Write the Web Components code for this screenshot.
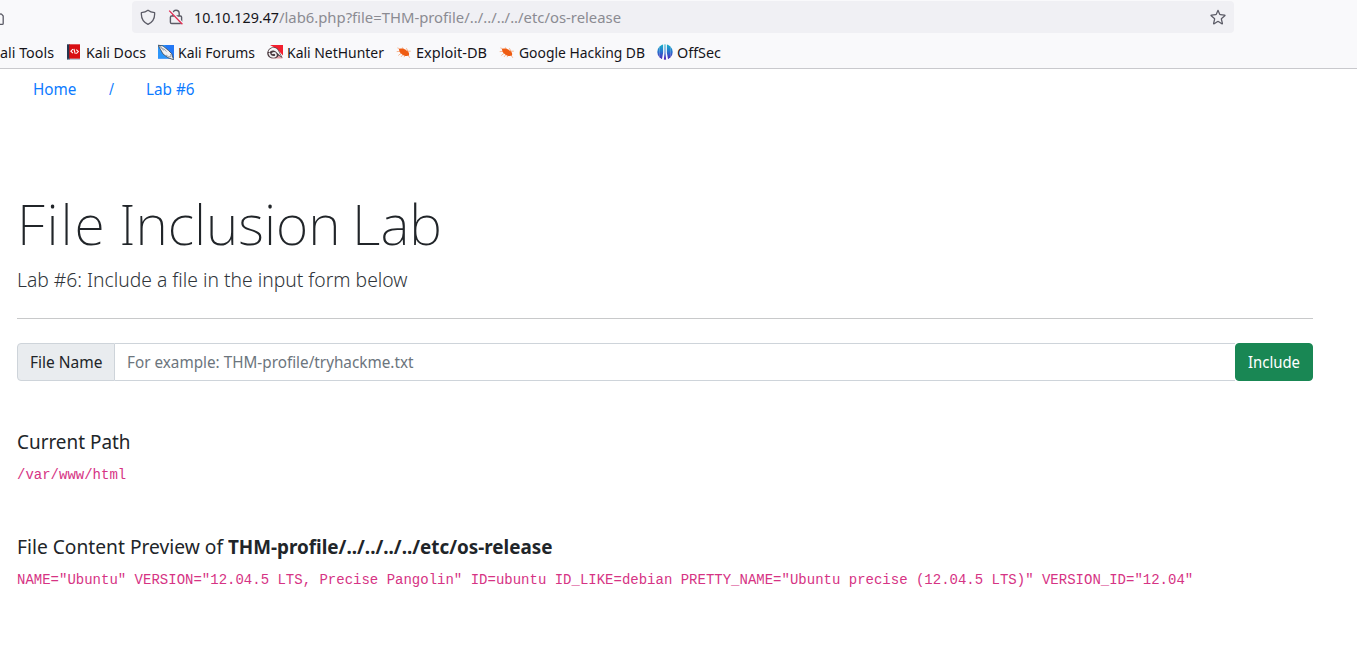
<!DOCTYPE html>
<html lang="en">
<head>
<meta charset="utf-8">
<title>File Inclusion Lab</title>
<style>
body{margin:0;background:#fff;color:#212529;font:400 16px/24px "Noto Sans","Open Sans",sans-serif;overflow:hidden}
</style>
</head>
<body>
<lab-window></lab-window>
<script>
const define=(name,html,ready)=>customElements.define(name,class extends HTMLElement{
  connectedCallback(){
    if(this.shadowRoot)return;
    const t=document.createElement('template');
    t.innerHTML=html;
    this.attachShadow({mode:'open'}).append(t.content.cloneNode(true));
    if(ready)ready.call(this,this.shadowRoot);
  }
});

/* One line of text condensed or widened to a given advance width. */
define('fit-text',`<style>:host{display:inline-block;white-space:pre;flex:none}span{display:inline-block;transform-origin:0 50%}</style><span><slot></slot></span>`,function(root){
  const s=root.querySelector('span'),w=+this.getAttribute('w'),n=s.getBoundingClientRect().width;
  this.style.width=w+'px';
  s.style.transform='scaleX('+w/n+')';
});

const icons={
  home:`<path d="M-4 8 0 4.200Q1 3.400 2 4.600L3.200 6V13.400Q3.200 14.400 2.200 14.400H0" fill="none" stroke="#5b5b66" stroke-width="1.300"/>`,
  shield:`<path d="M8 1.200C6.400 2.400 3.900 3.300 1.400 3.600 1 8.700 3.500 13.200 8 15.300 12.500 13.200 15 8.700 14.600 3.600 12.100 3.300 9.600 2.400 8 1.200Z" fill="none" stroke="#5b5b66" stroke-width="1.300" stroke-linejoin="round"/>`,
  lock:`<path d="M4.800 7V4.500a3.200 3.200 0 0 1 6.400 0V7M3.600 7h8.800q1.200 0 1.200 1.200v5q0 1.300-1.300 1.300H3.700q-1.300 0-1.300-1.300v-5Q2.400 7 3.600 7Z" fill="none" stroke="#5b5b66" stroke-width="1.400"/><path d="M1.600 1 15 14.900" stroke="#f0f0f4" stroke-width="2.400"/><path d="M1.200 1.600 14.400 15.300" stroke="#e22850" stroke-width="1.300"/>`,
  star:`<path d="m8 1.300 1.700 3.900q.15.400.6.450l4.200.4q.9.150.3.800l-3.200 2.700q-.3.300-.2.700l1 4.100q.1.800-.6.450L8.400 12.600q-.4-.2-.8 0L4.200 14.800q-.7.350-.6-.45l1-4.100q.1-.4-.2-.7L1.200 6.850q-.6-.65.3-.8l4.200-.4q.45-.05.6-.45Z" fill="none" stroke="#5b5b66" stroke-width="1.250" stroke-linejoin="round"/>`,
  docs:`<path d="M1 .3H4V15.700H1Z" fill="#253850"/><path d="M3.200.3H14V14.800H3.200Z" fill="#d90f13"/><path d="M1.500 14.800H14v.9H1.500Z" fill="#a4b7c9"/><path d="M6.900 5.200 4.900 7.200 6.900 9.200M10.300 5.600 12.300 7.600 10.300 9.600M7.900 4.900 9.300 9.900" fill="none" stroke="#fff" stroke-width="1.100"/>`,
  forums:`<path d="M0 1H16V14.600H0Z" fill="#2478f5"/><path d="M0 1H7L12 14.600H0Z" fill="#2c96fa"/><path d="M0 1.200 5 1.900 10.500 6.500 13.700 9.700 15.600 15.800 9.800 13.600 5 10 2.500 5.500Z" fill="#f1f1f3" stroke="#3c4552" stroke-width=".8"/><path d="M5.500 4.500 8.500 7.700M8 11 10.500 12.600 13 12.700 12.500 10" fill="none" stroke="#8b929c" stroke-width=".8"/><path d="M1 1.500 5.800 6.200" stroke="#4c5563" stroke-width=".8"/>`,
  nethunter:`<path d="M3 1H16V11.500L10 5Z" fill="#f2202f"/><path d="M8.500 12 12 9.500 15.500 14.500H3.500Z" fill="#e9a2aa"/><path d="M.3 8.300C1.500 2.800 8 1.900 11 5.200L15.800 14.300 11.500 11.500C11 13.500 9 14.500 6.500 14.300 2.500 14.500-.3 11.900.3 8.300Z" fill="#4a3a40"/><path d="M1.300 7.300C3.600 2.800 8.500 2.700 10.800 6.100L14.300 12.700 9.800 8.500C7.200 5.800 3.800 5.900 2.500 8.700Z" fill="#f5f5f7"/><path d="M2.300 9C2.400 11.600 4.400 13 6.900 12.900 8.800 12.700 9.500 11.200 8.700 9.900 7.900 8.500 5.900 8.500 5.200 9.900" fill="none" stroke="#f0eff1" stroke-width="1.700"/>`,
  bug:`<path d="m1.400 3.900 4 1.500M.7 7.600l4.700-.3M2.300 11.500 6 8.500M6.400 3.400 8 6.300M10.400 4.200 12 7.500M14.800 7.200H11M13.800 13.800l-2-3.100M8 13.200 9.500 10.500M5 12.900 7.600 9.800" stroke="#f48a4e" stroke-width=".6" fill="none"/><path d="M2.800 5.200C5 4 8.200 4.600 10.500 6.400 12.800 7.500 13.700 9.400 12.900 11.600 10.300 12.600 7.900 11.800 5.700 9.900 3.700 9 3.400 6.900 2.800 5.200Z" fill="#ef5c12"/>`,
  offsec:`<defs><linearGradient id="g" gradientUnits="userSpaceOnUse" x1="0" y1="0" x2="0" y2="16"><stop stop-color="#15b4c8"/><stop offset=".5" stop-color="#2970ce"/><stop offset="1" stop-color="#5620b8"/></linearGradient><clipPath id="c"><circle cx="8" cy="8" r="7.700"/></clipPath></defs><g clip-path="url(#c)"><path d="M0 0H2.400V16H0ZM2.600 0H6.100V9L4.900 15.500 2.600 14ZM9.900 0H13.400V14L11.100 15.500 9.900 9ZM13.600 0H16V16H13.600ZM7.500 0H8.500V9L9.200 16H6.800L7.500 9Z" fill="url(#g)"/></g>`
};
customElements.define('ui-icon',class extends HTMLElement{
  connectedCallback(){
    if(this.shadowRoot)return;
    this.attachShadow({mode:'open'}).innerHTML=`<style>:host{display:block;width:16px;height:16px;flex:none}svg{display:block}</style><svg width="16" height="16" viewBox="0 0 16 16">${icons[this.getAttribute('name')]}</svg>`;
  }
});

define('address-bar',`<style>
:host{display:flex;height:34px;padding-top:1px;box-sizing:border-box;align-items:flex-start}
.home{width:132px;padding-top:9px;box-sizing:border-box}
.field{width:1102px;height:32px;box-sizing:border-box;background:#f0f0f4;border-radius:4px;display:flex;align-items:center;padding:0 8px;font-size:15px;line-height:22px;color:#15141a}
.lock{margin:0 10px 0 12px}.path{color:#8b8b92}.star{margin-left:auto}
</style><div class="home"><ui-icon name="home"></ui-icon></div><div class="field"><ui-icon name="shield"></ui-icon><ui-icon class="lock" name="lock"></ui-icon><fit-text w="85">10.10.129.47</fit-text><fit-text class="path" w="342">/lab6.php?file=THM-profile/../../../../etc/os-release</fit-text><ui-icon class="star" name="star"></ui-icon></div>`);

define('book-mark',`<style>:host{display:flex;align-items:center;gap:4px}</style><slot></slot>`);

define('bookmarks-bar',`<style>
:host{display:flex;height:35px;box-sizing:border-box;padding-top:2px;border-bottom:1px solid #c9c9cd;align-items:center;gap:12px;font-size:15px;line-height:22px;color:#15141a}
</style>
<book-mark><fit-text w="54">ali Tools</fit-text></book-mark>
<book-mark><ui-icon name="docs"></ui-icon><fit-text w="60">Kali Docs</fit-text></book-mark>
<book-mark><ui-icon name="forums"></ui-icon><fit-text w="77">Kali Forums</fit-text></book-mark>
<book-mark><ui-icon name="nethunter"></ui-icon><fit-text w="97">Kali NetHunter</fit-text></book-mark>
<book-mark><ui-icon name="bug"></ui-icon><fit-text w="71">Exploit-DB</fit-text></book-mark>
<book-mark><ui-icon name="bug"></ui-icon><fit-text w="126">Google Hacking DB</fit-text></book-mark>
<book-mark><ui-icon name="offsec"></ui-icon><fit-text w="44">OffSec</fit-text></book-mark>`);

define('lab-nav',`<style>:host{display:flex;gap:32px;padding:8px 0 0 33px;height:32px;box-sizing:border-box;color:#0d7bff}</style>
<fit-text w="43.500">Home</fit-text><fit-text w="5">/</fit-text><fit-text w="48.500">Lab #6</fit-text>`);

define('lab-header',`<style>
:host{display:block;padding-top:89px;height:218px;box-sizing:border-box;border-bottom:1px solid #c8c9ca}
h1{margin:0 0 8px;font-weight:200;font-size:56px;line-height:67px}
.a{letter-spacing:2px}.b{letter-spacing:-2.800px}
p{margin:0;font-weight:300;font-size:20px;line-height:30px;color:#30353a}
</style><h1><fit-text w="425"><span class="a">Fil</span>e Inclusion<span class="b"> </span>Lab</fit-text></h1><p><fit-text w="390.500">Lab #6: Include a file in the input form below</fit-text></p>`);

define('file-form',`<style>
:host{display:flex;height:38px;margin-top:24px}
div{box-sizing:border-box;height:38px;line-height:24px;padding:6px 12px;border:1px solid #ced4da}
.label{width:98px;background:#e9ecef;border-radius:4px 0 0 4px}
.input{flex:1;border-left:0;border-right:0;color:#6c757d}
.go{width:78px;background:#198754;border-color:#198754;color:#fff;border-radius:4px}
</style><div class="label"><fit-text w="72.500">File Name</fit-text></div><div class="input"><fit-text w="286.500">For example: THM-profile/tryhackme.txt</fit-text></div><div class="go"><fit-text w="52">Include</fit-text></div>`);

define('result-block',`<style>
:host{display:block;height:57px;margin-top:48px}
h5{margin:0 0 9px;font-size:20px;line-height:24px;font-weight:400}
code{display:block;font:14px/24px "Liberation Mono",monospace;color:#d63384;white-space:pre}
</style><h5><slot name="title"></slot></h5><code><slot></slot></code>`);

define('lab-window',`<style>
:host{display:block;width:1357px;height:653px;overflow:hidden}
header{background:#f9f9fb}
main{padding:0 44px 0 17px}
.first{margin-top:49px}
b{font-weight:700}
</style><header><address-bar></address-bar><bookmarks-bar></bookmarks-bar></header>
<lab-nav></lab-nav>
<main><lab-header></lab-header><file-form></file-form>
<result-block class="first"><fit-text slot="title" w="113.500">Current Path</fit-text>/var/www/html</result-block>
<result-block><span slot="title"><fit-text w="211">File Content Preview of </fit-text><fit-text w="324.500"><b>THM-profile/../../../../etc/os-release</b></fit-text></span>NAME="Ubuntu" VERSION="12.04.5 LTS, Precise Pangolin" ID=ubuntu ID_LIKE=debian PRETTY_NAME="Ubuntu precise (12.04.5 LTS)" VERSION_ID="12.04"</result-block></main>`);
</script>
</body>
</html>
